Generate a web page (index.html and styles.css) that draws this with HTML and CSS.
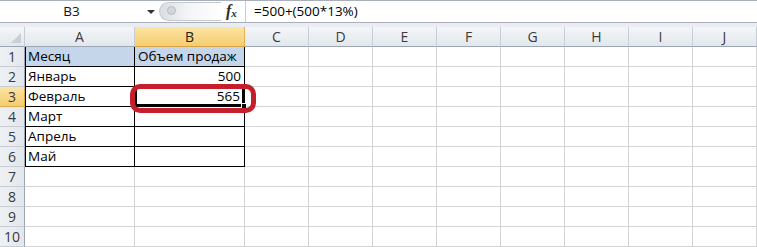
FILE: index.html
```html
<!DOCTYPE html>
<html lang="ru">
<head>
  <meta charset="UTF-8">
  <title>Объем продаж</title>
  <link rel="stylesheet" href="styles.css">
</head>
<body>
  <div class="formula-bar">
    <div class="name-box">B3</div>
    <div class="name-drop"><span class="arrow"></span></div>
    <div class="pill"><span class="knob"></span></div>
    <div class="fx"><i>f</i><sub>x</sub></div>
    <div class="formula">=500+(500*13%)</div>
  </div>
  <div class="band"></div>

  <div class="sheet">
    <div class="hd corner"></div>
    <div class="hd">A</div>
    <div class="hd sel">B</div>
    <div class="hd">C</div>
    <div class="hd">D</div>
    <div class="hd">E</div>
    <div class="hd">F</div>
    <div class="hd">G</div>
    <div class="hd">H</div>
    <div class="hd">I</div>
    <div class="hd">J</div>

    <div class="rn">1</div>
    <div class="c tb ta fill">Месяц</div>
    <div class="c tb fill">Объем продаж</div>
    <div class="c"></div><div class="c"></div><div class="c"></div><div class="c"></div><div class="c"></div><div class="c"></div><div class="c"></div><div class="c"></div>

    <div class="rn">2</div>
    <div class="c tb ta">Январь</div>
    <div class="c tb num">500</div>
    <div class="c"></div><div class="c"></div><div class="c"></div><div class="c"></div><div class="c"></div><div class="c"></div><div class="c"></div><div class="c"></div>

    <div class="rn sel">3</div>
    <div class="c tb ta">Февраль</div>
    <div class="c tb num active">565<span class="handle"></span><span class="ring"></span></div>
    <div class="c"></div><div class="c"></div><div class="c"></div><div class="c"></div><div class="c"></div><div class="c"></div><div class="c"></div><div class="c"></div>

    <div class="rn">4</div>
    <div class="c tb ta">Март</div>
    <div class="c tb"></div>
    <div class="c"></div><div class="c"></div><div class="c"></div><div class="c"></div><div class="c"></div><div class="c"></div><div class="c"></div><div class="c"></div>

    <div class="rn">5</div>
    <div class="c tb ta">Апрель</div>
    <div class="c tb"></div>
    <div class="c"></div><div class="c"></div><div class="c"></div><div class="c"></div><div class="c"></div><div class="c"></div><div class="c"></div><div class="c"></div>

    <div class="rn">6</div>
    <div class="c tb ta">Май</div>
    <div class="c tb"></div>
    <div class="c"></div><div class="c"></div><div class="c"></div><div class="c"></div><div class="c"></div><div class="c"></div><div class="c"></div><div class="c"></div>

    <div class="rn">7</div>
    <div class="c"></div><div class="c"></div><div class="c"></div><div class="c"></div><div class="c"></div><div class="c"></div><div class="c"></div><div class="c"></div><div class="c"></div><div class="c"></div>

    <div class="rn">8</div>
    <div class="c"></div><div class="c"></div><div class="c"></div><div class="c"></div><div class="c"></div><div class="c"></div><div class="c"></div><div class="c"></div><div class="c"></div><div class="c"></div>

    <div class="rn">9</div>
    <div class="c"></div><div class="c"></div><div class="c"></div><div class="c"></div><div class="c"></div><div class="c"></div><div class="c"></div><div class="c"></div><div class="c"></div><div class="c"></div>

    <div class="rn">10</div>
    <div class="c"></div><div class="c"></div><div class="c"></div><div class="c"></div><div class="c"></div><div class="c"></div><div class="c"></div><div class="c"></div><div class="c"></div><div class="c"></div>
  </div>
</body>
</html>
```

FILE: styles.css
```css
* { box-sizing: border-box; }

body {
  margin: 0;
  width: 757px;
  height: 247px;
  overflow: hidden;
  background: #ffffff;
  font-family: "Open Sans", "Noto Sans", sans-serif;
  font-size: 13px;
  color: #000;
}

/* formula bar */
.formula-bar {
  display: flex;
  height: 23px;
  border-top: 1px solid #a9b0ba;
  border-bottom: 1px solid #a9b0ba;
  background: #fff;
}

.name-box {
  width: 143px;
  text-align: center;
  line-height: 21px;
  font-size: 13.5px;
  color: #111;
}

.name-drop {
  width: 16px;
  display: flex;
  align-items: center;
  justify-content: center;
}

.arrow {
  width: 0;
  height: 0;
  border-left: 4px solid transparent;
  border-right: 4px solid transparent;
  border-top: 4px solid #333;
  margin-top: 1px;
}

.pill {
  width: 62px;
  margin: 1px 0;
  border: 1px solid #c4c9d0;
  border-right: none;
  border-radius: 10px 0 0 10px;
  background: linear-gradient(to right, #dadde2, #f3f4f6 45%, #ffffff);
  position: relative;
}

.knob {
  position: absolute;
  left: 7px;
  top: 3px;
  width: 9px;
  height: 9px;
  border-radius: 50%;
  background: #d3d6da;
  border: 1px solid #b8bdc4;
}

.fx {
  width: 24px;
  font-family: "Liberation Serif", serif;
  font-size: 16px;
  line-height: 20px;
  color: #2c2c2c;
  padding-left: 5px;
}

.fx i { font-weight: bold; }
.fx sub { font-size: 11px; font-style: italic; font-weight: bold; vertical-align: -1px; }

.formula {
  flex: 1;
  border-left: 1px solid #c9ced5;
  padding-left: 8px;
  line-height: 21px;
  font-size: 13.5px;
}

.band {
  height: 4px;
  background: #e9edf2;
}

/* sheet grid */
.sheet {
  display: grid;
  grid-template-columns: 25px 110px 110px repeat(8, 64px);
  grid-auto-rows: 20px;
}

.hd {
  background: linear-gradient(#f4f6f8, #e3e7ec);
  border-right: 1px solid #c8cdd4;
  border-bottom: 1px solid #9aa6b4;
  text-align: center;
  line-height: 19px;
  color: #3b3b3b;
  font-size: 14px;
}

.hd.sel {
  background: linear-gradient(#fbe4a4, #f5cd6e);
  border-right-color: #e8b24f;
  border-bottom-color: #d9a445;
  color: #222;
}

.corner { position: relative; }

.corner::after {
  content: "";
  position: absolute;
  right: 3px;
  bottom: 3px;
  border-left: 10px solid transparent;
  border-bottom: 10px solid #c9ced5;
}

.rn {
  background: linear-gradient(to right, #eef1f4, #e3e7ec);
  border-right: 1px solid #9aa6b4;
  border-bottom: 1px solid #c8cdd4;
  text-align: center;
  line-height: 19px;
  color: #3b3b3b;
  font-size: 14px;
}

.rn.sel {
  background: linear-gradient(#fbe4a4, #f5cd6e);
  border-bottom-color: #e0ac4c;
  border-right-color: #d9a445;
}

.c {
  border-right: 1px solid #d4d4d4;
  border-bottom: 1px solid #d4d4d4;
  line-height: 19px;
  padding: 0 3px;
  font-size: 13.5px;
  white-space: nowrap;
}

.tb {
  border-right-color: #000;
  border-bottom-color: #000;
}

.ta { box-shadow: inset 1px 0 0 #000; }

.fill { background: #c5d5ea; }

.num { text-align: right; }

.active {
  position: relative;
  box-shadow: inset 0 0 0 2px #000;
  padding-right: 4px;
}

.handle {
  position: absolute;
  right: -3px;
  bottom: -3px;
  width: 6px;
  height: 6px;
  background: #000;
  border: 1px solid #fff;
}

.ring {
  position: absolute;
  left: -5px;
  top: -3px;
  width: 126px;
  height: 29px;
  border: 5px solid #c41f2b;
  border-radius: 10px;
}
```
